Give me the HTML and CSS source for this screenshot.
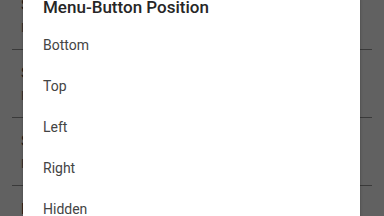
FILE: index.html
```html
<!DOCTYPE html>
<html lang="en">
<head>
    <meta charset="UTF-8">
    <meta name="viewport" content="width=device-width, initial-scale=1.0">
    <title>Settings</title>
    <link rel="stylesheet" href="styles.css">
</head>
<body>
    <div class="settings">
        <div class="pref">
            <div class="pref-title">Show status bar</div>
            <div class="pref-summary">Display the status bar</div>
        </div>
        <div class="pref">
            <div class="pref-title">Screen orientation</div>
            <div class="pref-summary">Follow system</div>
        </div>
        <div class="pref">
            <div class="pref-title">Scroll mode</div>
            <div class="pref-summary">Page by page</div>
        </div>
        <div class="pref">
            <div class="pref-title">Menu-Button Position</div>
            <div class="pref-summary">Bottom</div>
        </div>
    </div>

    <div class="scrim">
        <div class="dialog">
            <div class="dialog-title">Menu-Button Position</div>
            <ul class="choices">
                <li>Bottom</li>
                <li>Top</li>
                <li>Left</li>
                <li>Right</li>
                <li>Hidden</li>
            </ul>
        </div>
    </div>
</body>
</html>
```

FILE: styles.css
```css
html {
    height: 100%;
}
body {
    margin: 0;
    height: 100%;
    overflow: hidden;
    background: #fff;
    font-family: Roboto, "Noto Sans", Arial, sans-serif;
    position: relative;
}
.settings {
    margin-top: -18px;
}
.pref {
    height: 68px;
    box-sizing: border-box;
    margin: 0 12px;
    padding: 14px 0 0 9px;
    border-bottom: 1px solid #999;
}
.pref-title {
    font-size: 15px;
    color: #444;
}
.pref-summary {
    font-size: 13px;
    color: #777;
    margin-top: 6px;
}
.scrim {
    position: absolute;
    inset: 0;
    background: rgba(0, 0, 0, 0.62);
}
.dialog {
    position: absolute;
    left: 23px;
    width: 337px;
    top: -3px;
    height: 240px;
    background: #fff;
    border-radius: 3px;
    box-shadow: 0 0 3px rgba(0,0,0,0.3);
    padding-left: 20px;
    box-sizing: border-box;
}
.dialog-title {
    font-size: 17px;
    font-weight: 500;
    line-height: 20px;
    color: #262626;
}
.choices {
    list-style: none;
    margin: 8px 0 0;
    padding: 0;
}
.choices li {
    font-size: 14px;
    line-height: 41px;
    color: #444;
}
```
